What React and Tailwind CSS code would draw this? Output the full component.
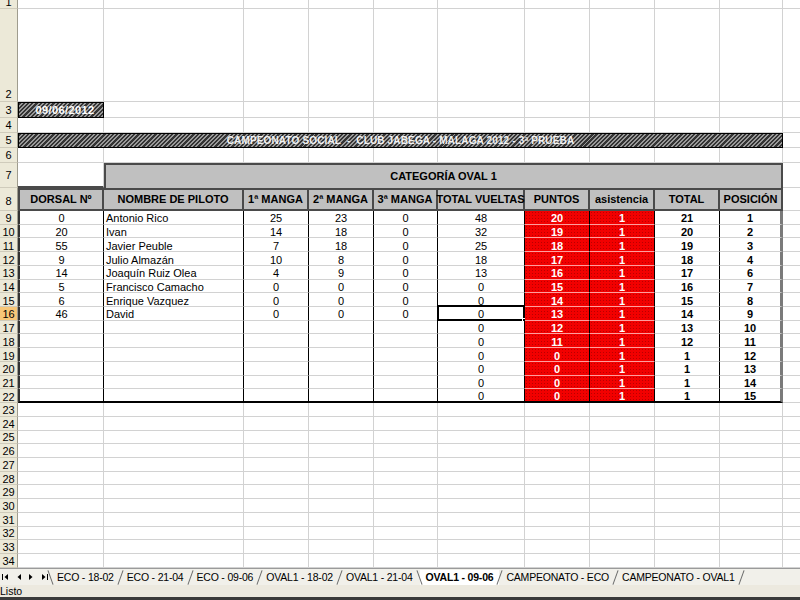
import React from "react";

// column widths A..J (K fills the rest of the window)
const W = [
  "w-[86px]",
  "w-[140px]",
  "w-[65px]",
  "w-[65px]",
  "w-[64px]",
  "w-[87px]",
  "w-[65px]",
  "w-[65px]",
  "w-[65px]",
  "w-[63px]",
];

const HATCH =
  "bg-[repeating-linear-gradient(135deg,#343434_0px,#343434_1.6px,#9a9a9a_1.6px,#9a9a9a_3px)]";

const RED =
  "bg-[#f20000] bg-[radial-gradient(#b80000_0.6px,transparent_0.9px)] bg-size-[3px_3px]";

const pilots = [
  [0, "Antonio Rico", 25, 23, 0, 48, 20, 1, 21, 1],
  [20, "Ivan", 14, 18, 0, 32, 19, 1, 20, 2],
  [55, "Javier Peuble", 7, 18, 0, 25, 18, 1, 19, 3],
  [9, "Julio Almazán", 10, 8, 0, 18, 17, 1, 18, 4],
  [14, "Joaquín Ruiz Olea", 4, 9, 0, 13, 16, 1, 17, 6],
  [5, "Francisco Camacho", 0, 0, 0, 0, 15, 1, 16, 7],
  [6, "Enrique Vazquez", 0, 0, 0, 0, 14, 1, 15, 8],
  [46, "David", 0, 0, 0, 0, 13, 1, 14, 9],
  ["", "", "", "", "", 0, 12, 1, 13, 10],
  ["", "", "", "", "", 0, 11, 1, 12, 11],
  ["", "", "", "", "", 0, 0, 1, 1, 12],
  ["", "", "", "", "", 0, 0, 1, 1, 13],
  ["", "", "", "", "", 0, 0, 1, 1, 14],
  ["", "", "", "", "", 0, 0, 1, 1, 15],
];

const headers = [
  "DORSAL Nº",
  "NOMBRE DE PILOTO",
  "1ª MANGA",
  "2ª MANGA",
  "3ª MANGA",
  "TOTAL VUELTAS",
  "PUNTOS",
  "asistencia",
  "TOTAL",
  "POSICIÓN",
];

const tabs = [
  "ECO - 18-02",
  "ECO - 21-04",
  "ECO - 09-06",
  "OVAL1 - 18-02",
  "OVAL1 - 21-04",
  "OVAL1 - 09-06",
  "CAMPEONATO - ECO",
  "CAMPEONATO - OVAL1",
];

const RowHead = ({ num, active, align = "items-center" }) => (
  <div
    className={`w-[18px] shrink-0 flex ${align} justify-center overflow-hidden text-[11px] leading-[12px] text-black border-r border-b border-r-[#9f9c8e] border-b-[#cfcbbb] ${
      active ? "bg-[#f8c778]" : "bg-[#ece9d8]"
    }`}
  >
    {num}
  </div>
);

const Blank = ({ w }) => (
  <div className={`${w} shrink-0 border-r border-b border-[#d2d2d2]`} />
);

const Rest = () => <div className="flex-1 border-b border-[#d2d2d2]" />;

const Row = ({ h, children }) => <div className={`flex shrink-0 ${h}`}>{children}</div>;

const BlankRow = ({ h, num, align }) => (
  <Row h={h}>
    <RowHead num={num} align={align} />
    {W.map((w, i) => (
      <Blank key={i} w={w} />
    ))}
    <Rest />
  </Row>
);

const NavArrow = ({ dir, bar }) => (
  <svg width="9" height="8" viewBox="0 0 9 8" className="shrink-0">
    {dir === "left" ? (
      <>
        {bar && <rect x="1" y="1" width="1" height="6" fill="#000" />}
        <path d="M7 1 L3.5 4 L7 7 Z" fill="#000" />
      </>
    ) : (
      <>
        <path d="M2 1 L5.5 4 L2 7 Z" fill="#000" />
        {bar && <rect x="7" y="1" width="1" height="6" fill="#000" />}
      </>
    )}
  </svg>
);

const Slash = ({ back }) => (
  <span
    className={`block w-px h-[15px] shrink-0 bg-[#6b6b6b] ${
      back ? "-rotate-[20deg]" : "rotate-[20deg]"
    }`}
  />
);

export default function App() {
  return (
    <div className="w-[800px] h-[600px] overflow-hidden bg-white flex flex-col font-['Liberation_Sans',Arial,sans-serif] text-black">
      {/* sheet grid */}
      <div className="flex flex-col flex-1 overflow-hidden">
        <BlankRow h="h-[9px]" num="1" align="items-end" />
        <BlankRow h="h-[93px]" num="2" align="items-end pb-[1px]" />

        {/* date cell */}
        <Row h="h-[16px]">
          <RowHead num="3" />
          <div
            className={`${W[0]} shrink-0 ${HATCH} border border-black flex items-center justify-center pl-[8px] text-[11px] tracking-[0.4px] font-bold text-white`}
          >
            09/06/2012
          </div>
          {W.slice(1).map((w, i) => (
            <Blank key={i} w={w} />
          ))}
          <Rest />
        </Row>

        <BlankRow h="h-[15px]" num="4" />

        {/* title banner */}
        <Row h="h-[15px]">
          <RowHead num="5" />
          <div
            className={`w-[765px] shrink-0 ${HATCH} border border-black flex items-center justify-center text-[10px] font-bold text-[#f2f2f2] tracking-[0.15px]`}
          >
            CAMPEONATO SOCIAL&nbsp;&nbsp;-&nbsp;&nbsp;CLUB JABEGA - MALAGA 2012 - 3ª PRUEBA
          </div>
          <Rest />
        </Row>

        <BlankRow h="h-[15px]" num="6" />

        {/* category header */}
        <Row h="h-[25px]">
          <RowHead num="7" />
          <div className={`${W[0]} shrink-0 border-b-2 border-r border-b-[#4a4a4a] border-r-[#d2d2d2]`} />
          <div className="w-[679px] shrink-0 bg-[#c0c0c0] border-2 border-b-0 border-[#4a4a4a] flex items-center justify-center text-[11px] font-bold">
            CATEGORÍA OVAL 1
          </div>
          <Rest />
        </Row>

        {/* column headers */}
        <Row h="h-[23px]">
          <RowHead num="8" align="items-center pt-[3px]" />
          {headers.map((t, i) => (
            <div
              key={t}
              className={`${W[i]} shrink-0 bg-[#c0c0c0] border-t-2 border-b-2 border-r-2 border-[#4a4a4a] ${
                i === 0 ? "border-l-2" : ""
              } flex items-center justify-center whitespace-nowrap text-[11px] font-bold`}
            >
              {t}
            </div>
          ))}
          <Rest />
        </Row>

        {/* results */}
        {pilots.map((r, ri) => {
          const last = ri === pilots.length - 1;
          const rowNum = 9 + ri;
          return (
            <Row key={ri} h="h-[13.73px]">
              <RowHead num={rowNum} active={rowNum === 16} align="items-center pt-[2px]" />
              {r.map((v, ci) => {
                const red = ci === 6 || ci === 7;
                const bold = ci >= 6;
                const edge =
                  ci === 9
                    ? "border-r-[3px] border-r-[#7a7a7a]"
                    : "border-r border-r-black";
                const bottom = last
                  ? "border-b-2 border-b-black"
                  : red
                  ? "border-b border-b-[#ff9d9d]"
                  : "border-b border-b-[#d2d2d2]";
                const selected = rowNum === 16 && ci === 5;
                return (
                  <div
                    key={ci}
                    className={`${W[ci]} shrink-0 relative flex items-center pt-[3px] whitespace-nowrap text-[11px] leading-none ${edge} ${bottom} ${
                      ci === 0 ? "border-l-2 border-l-[#333]" : ""
                    } ${ci === 1 ? "justify-start pl-[2px]" : "justify-center"} ${
                      red ? `${RED} text-white` : ""
                    } ${bold ? "font-bold" : ""}`}
                  >
                    {v}
                    {selected && (
                      <span className="absolute -left-[1px] -top-[2px] -right-[1px] -bottom-[1px] border-2 border-black">
                        <span className="absolute -right-[3px] -bottom-[3px] w-[4px] h-[4px] bg-black border border-white" />
                      </span>
                    )}
                  </div>
                );
              })}
              <Rest />
            </Row>
          );
        })}

        {Array.from({ length: 12 }, (_, i) => (
          <BlankRow key={i} h="h-[13.73px]" num={23 + i} align="items-center pt-[1px]" />
        ))}
      </div>

      {/* sheet tabs */}
      <div className="h-[17px] shrink-0 flex items-center bg-[#f1f0ea] border-t border-[#9a9a9a] text-[10.5px] tracking-[-0.2px]">
        <div className="w-[50px] shrink-0 flex items-center gap-[4px] pl-[1px]">
          <NavArrow dir="left" bar />
          <NavArrow dir="left" />
          <NavArrow dir="right" />
          <NavArrow dir="right" bar />
        </div>
        <Slash back />
        {tabs.map((t, i) => {
          const active = i === 5;
          return (
            <React.Fragment key={t}>
              <span
                className={`px-[6px] whitespace-nowrap leading-[15px] ${
                  active ? "bg-white font-bold" : ""
                }`}
              >
                {t}
              </span>
              <Slash back={i === 4} />
            </React.Fragment>
          );
        })}
      </div>

      {/* status bar */}
      <div className="h-[12px] shrink-0 flex items-center bg-[#ece9df] text-[10.5px] leading-none">
        Listo
      </div>
      <div className="h-[3px] shrink-0 bg-[#3a3a3a]" />
    </div>
  );
}
